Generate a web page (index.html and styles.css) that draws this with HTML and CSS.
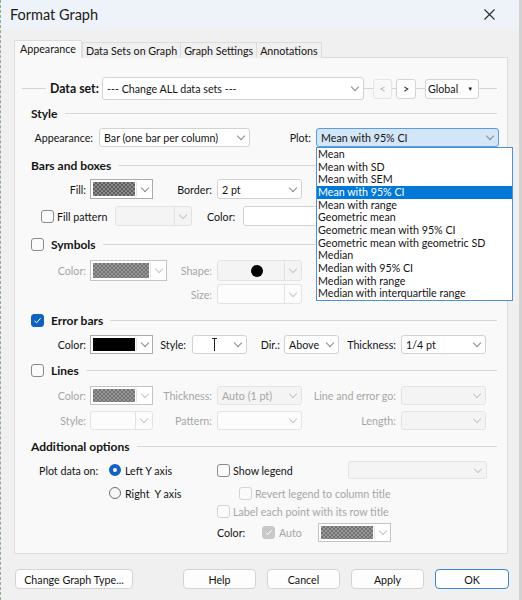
FILE: index.html
```html
<!DOCTYPE html>
<html lang="en">
<head>
  <meta charset="UTF-8" />
  <meta name="viewport" content="width=device-width, initial-scale=1.0" />
  <title>Format Graph</title>
  <link rel="stylesheet" href="styles.css">
</head>
<body>
  <div class="window">
    <div class="titlebar">
      <span class="title">Format Graph</span>
      <svg class="close" width="11" height="11" viewBox="0 0 11 11">
        <path d="M0.5 0.5 L10.5 10.5 M10.5 0.5 L0.5 10.5" stroke="#2b2b2b" stroke-width="1.1" fill="none" />
      </svg>
    </div>

    <div class="tabs">
      <div class="tab active">Appearance</div>
      <div class="tab">Data Sets on Graph</div>
      <div class="tab">Graph Settings</div>
      <div class="tab">Annotations</div>
    </div>

    <div class="panel">
      <!-- data set picker -->
      <div class="dataset">
        <span class="dataset-label">Data set:</span>
        <div class="combo big"><span>--- Change ALL data sets ---</span><span class="drop"></span></div>
        <span class="nav-btn off">&lt;</span>
        <span class="nav-btn">&gt;</span>
        <span class="global-btn">Global <span class="tri">&#9660;</span></span>
      </div>

      <div class="sec mt5">Style</div>
      <div class="row-style">
        <span class="lbl-app">Appearance:</span>
        <div class="combo w151"><span>Bar (one bar per column)</span><span class="drop"></span></div>
        <span class="lbl-plot">Plot:</span>
        <div class="combo focus w183"><span>Mean with 95% CI</span><span class="drop"></span></div>
      </div>

      <div class="sec mt10">Bars and boxes</div>
      <div class="grid mt6">
        <span class="lbl">Fill:</span>
        <div class="swatch"><span class="chip"></span><span class="drop"></span></div>
        <span class="lbl">Border:</span>
        <div class="combo"><span>2 pt</span><span class="drop"></span></div>
      </div>
      <div class="row-pattern">
        <span class="check"></span>
        <span class="pattern-text">Fill pattern</span>
        <div class="combo off split w77"><span class="drop"></span></div>
        <span class="pattern-color">Color:</span>
        <div class="combo w90"><span class="drop"></span></div>
      </div>

      <div class="sec mt10"><span class="check"></span>Symbols</div>
      <div class="grid mt8 h21">
        <span class="lbl dim">Color:</span>
        <div class="swatch off wide"><span class="chip"></span><span class="drop"></span></div>
        <span class="lbl dim">Shape:</span>
        <div class="combo off split shape"><span class="dot"></span><span class="drop"></span></div>
      </div>
      <div class="grid mt3">
        <span></span>
        <span></span>
        <span class="lbl dim">Size:</span>
        <div class="combo off light split"><span class="drop"></span></div>
      </div>

      <div class="sec mt8"><span class="check on"><svg width="11" height="11" viewBox="0 0 11 11"><path d="M2.5 5.8 L4.6 7.8 L8.6 3.2" stroke="#fff" stroke-width="1" fill="none" /></svg></span>Error bars</div>
      <div class="row-error">
        <span class="lbl">Color:</span>
        <div class="swatch black"><span class="chip"></span><span class="drop"></span></div>
        <span class="lbl-style">Style:</span>
        <div class="combo w55 tee">
          <svg width="7" height="15" viewBox="0 0 7 15"><path d="M1 1.5 H6 M3.5 1.5 V14" stroke="#222" stroke-width="1" fill="none" /></svg>
          <span class="drop"></span>
        </div>
        <span class="lbl-dir">Dir.:</span>
        <div class="combo w55"><span>Above</span><span class="drop"></span></div>
        <span class="lbl-thick">Thickness:</span>
        <div class="combo"><span>1/4 pt</span><span class="drop"></span></div>
      </div>

      <div class="sec mt8"><span class="check"></span>Lines</div>
      <div class="grid mt8 h19">
        <span class="lbl dim">Color:</span>
        <div class="swatch off"><span class="chip"></span><span class="drop"></span></div>
        <span class="lbl dim">Thickness:</span>
        <div class="combo off"><span>Auto (1 pt)</span><span class="drop"></span></div>
        <span class="lbl dim">Line and error go:</span>
        <div class="combo off"><span class="drop"></span></div>
      </div>
      <div class="grid mt6 h19">
        <span class="lbl dim">Style:</span>
        <div class="combo off light split w63"><span class="drop"></span></div>
        <span class="lbl dim">Pattern:</span>
        <div class="combo off light"><span class="drop"></span></div>
        <span class="lbl dim">Length:</span>
        <div class="combo off"><span class="drop"></span></div>
      </div>

      <div class="sec mt8">Additional options</div>
      <div class="opt-row mt7">
        <span class="opt-lbl">Plot data on:</span>
        <span class="opt-mid"><span class="radio on"></span>Left Y axis</span>
        <span class="opt-right">
          <span class="check"></span><span class="legend-text">Show legend</span>
          <div class="combo off legend-combo"><span class="drop"></span></div>
        </span>
      </div>
      <div class="opt-row mt5">
        <span class="opt-lbl"></span>
        <span class="opt-mid"><span class="radio"></span>Right&nbsp; Y axis</span>
        <span class="opt-right indent dim"><span class="check off"></span>Revert legend to column title</span>
      </div>
      <div class="opt-row">
        <span class="opt-lbl"></span>
        <span class="opt-mid"></span>
        <span class="opt-right dim"><span class="check off"></span>Label each point with its row title</span>
      </div>
      <div class="opt-row mt3">
        <span class="opt-lbl"></span>
        <span class="opt-mid"></span>
        <span class="opt-right">
          <span class="color-text">Color:</span>
          <span class="check off on-off"><svg width="11" height="11" viewBox="0 0 11 11"><path d="M2.5 5.8 L4.6 7.8 L8.6 3.2" stroke="#fff" stroke-width="1" fill="none" /></svg></span>
          <span class="auto-text dim">Auto</span>
          <div class="swatch off auto-swatch"><span class="chip"></span><span class="drop"></span></div>
        </span>
      </div>
    </div>

    <div class="buttons">
      <span class="btn wide">Change Graph Type...</span>
      <span class="btn">Help</span>
      <span class="btn">Cancel</span>
      <span class="btn">Apply</span>
      <span class="btn ok">OK</span>
    </div>

    <!-- open list of the Plot combo -->
    <ul class="plot-list">
      <li>Mean</li>
      <li>Mean with SD</li>
      <li>Mean with SEM</li>
      <li class="sel">Mean with 95% CI</li>
      <li>Mean with range</li>
      <li>Geometric mean</li>
      <li>Geometric mean with 95% CI</li>
      <li>Geometric mean with geometric SD</li>
      <li>Median</li>
      <li>Median with 95% CI</li>
      <li>Median with range</li>
      <li>Median with interquartile range</li>
    </ul>
  </div>
</body>
</html>
```

FILE: styles.css
```css
* {
  box-sizing: border-box;
}

html, body {
  margin: 0;
  padding: 0;
  width: 522px;
  height: 600px;
  overflow: hidden;
  background-color: #fafafa;
  font-family: Lato, "Noto Sans", sans-serif;
  font-size: 10.7px;
  color: #141414;
}

.window {
  position: relative;
  width: 522px;
  height: 600px;
  background-color: #f0f0f0;
  border-left: 1px dashed #93ab93;
  border-right: 3px solid #d2d2d2;
}

/* title bar */
.titlebar {
  display: flex;
  align-items: center;
  height: 29px;
  padding-left: 9px;
  background-color: #eef2f9;
}

.title {
  font-size: 14.5px;
  color: #1a1a1a;
}

.close {
  margin-left: auto;
  margin-right: 24px;
}

/* tabs */
.tabs {
  display: flex;
  align-items: flex-end;
  height: 18px;
  margin: 11px 0 0 13px;
  position: relative;
  z-index: 1;
}

.tab {
  height: 16px;
  line-height: 15px;
  padding: 0 3px;
  margin-left: -1px;
  border: 1px solid #dcdcdc;
  border-bottom: none;
  background-color: #f0f0f0;
}

.tab.active {
  height: 18px;
  line-height: 16px;
  padding: 0 5px;
  margin-left: 0;
  margin-right: 1px;
  background-color: #f9f9f9;
}

.panel {
  margin: -1px 0 0 13px;
  width: 494px;
  height: 497px;
  background-color: #f9f9f9;
  border: 1px solid #dcdcdc;
}

/* data set row, the rule runs behind the controls */
.dataset {
  display: flex;
  align-items: center;
  width: 475px;
  height: 23px;
  margin: 19px 0 0 7px;
  background: linear-gradient(#d4d4d4, #d4d4d4) 0 50% / 100% 1px no-repeat;
}

.dataset-label {
  width: 56px;
  margin-left: 24px;
  padding-left: 4px;
  background-color: #f9f9f9;
  font-weight: bold;
  font-size: 12.3px;
  line-height: 23px;
  white-space: nowrap;
}

.nav-btn {
  width: 19px;
  height: 20px;
  margin-left: 9px;
  display: flex;
  align-items: center;
  justify-content: center;
  background-color: #fdfdfd;
  border: 1px solid #d3d3d3;
  border-radius: 3px;
}

.nav-btn + .nav-btn {
  width: 20px;
  margin-left: 4px;
}

.nav-btn.off {
  color: #b5b5b5;
  background-color: #f8f8f8;
  border-color: #e6e6e6;
}

.global-btn {
  width: 54px;
  height: 20px;
  margin-left: 9px;
  padding-left: 2px;
  display: flex;
  align-items: center;
  background-color: #fdfdfd;
  border: 1px solid #d3d3d3;
  border-radius: 3px;
}

.tri {
  font-size: 6px;
  margin-left: 9px;
}

/* section headings with a rule */
.sec {
  display: flex;
  align-items: center;
  width: 466px;
  height: 16px;
  margin-left: 16px;
  font-weight: bold;
  font-size: 12px;
  white-space: nowrap;
}

.sec::after {
  content: '';
  flex: 1;
  height: 1px;
  margin-left: 7px;
  background-color: #d6d6d6;
}

.sec .check {
  margin-right: 7px;
}

.mt3 { margin-top: 3px; }
.mt5 { margin-top: 5px; }
.mt6 { margin-top: 6px; }
.mt7 { margin-top: 7px; }
.mt8 { margin-top: 8px; }
.mt10 { margin-top: 10px; }

/* combo boxes */
.combo {
  display: flex;
  align-items: center;
  height: 20px;
  width: 85px;
  padding-left: 4px;
  background-color: #fff;
  border: 1px solid #d2d2d2;
  border-radius: 3px;
  white-space: nowrap;
}

.combo.big {
  width: 262px;
  height: 23px;
}

.combo.focus {
  background-color: #d2e6f8;
  border-color: #5b9ddc;
}

.combo.off {
  background-color: #f4f4f4;
  border-color: #e3e3e3;
  color: #a6a6a6;
}

.combo.light {
  background-color: #fcfcfc;
}

.drop {
  margin-left: auto;
  width: 17px;
  align-self: stretch;
  display: flex;
  align-items: center;
  justify-content: center;
  flex: none;
}

.drop::after {
  content: '';
  width: 5px;
  height: 5px;
  margin-top: -3px;
  border-right: 1px solid #8a8a8a;
  border-bottom: 1px solid #8a8a8a;
  transform: rotate(45deg);
}

.off .drop::after {
  border-color: #c6c6c6;
}

.split .drop {
  border-left: 1px solid #e2e2e2;
}

.w55 { width: 55px; }
.w63 { width: 63px; }
.w77 { width: 77px; }
.w90 { width: 90px; }
.w151 { width: 151px; }
.w183 { width: 183px; }

/* colour buttons */
.swatch {
  display: flex;
  width: 63px;
  height: 20px;
  padding: 2px 0 2px 2px;
  background-color: #fff;
  border: 1px solid #ababab;
}

.swatch.wide {
  width: 77px;
}

.chip {
  flex: 1;
  background: repeating-conic-gradient(#5f5f5f 0 25%, #8a8a8a 0 50%) 0 0 / 4px 4px;
}

.swatch.off .chip {
  background: repeating-conic-gradient(#727272 0 25%, #979797 0 50%) 0 0 / 4px 4px;
}

.swatch.off {
  border-color: #c4c4c4;
}

.swatch.black .chip {
  background: #000;
}

.swatch .drop {
  width: 16px;
  margin-left: 1px;
  border-left: 1px solid #e4e4e4;
}

/* rows */
.row-style {
  display: flex;
  align-items: center;
  height: 19px;
  margin-top: 7px;
}

.row-style .combo {
  height: 19px;
}

.lbl-app {
  width: 84px;
  padding-right: 6px;
  text-align: right;
}

.lbl-plot {
  width: 66px;
  padding-right: 5px;
  text-align: right;
}

.grid {
  display: grid;
  grid-template-columns: 75px 73px 54px 85px 99px 85px;
  align-items: center;
  height: 20px;
}

.grid.h21 { height: 21px; }
.grid.h19 { height: 19px; }

.grid .combo,
.grid .swatch {
  height: 100%;
}

.lbl {
  text-align: right;
  padding-right: 5px;
  white-space: nowrap;
}

.grid .lbl:first-child {
  padding-right: 4px;
}

.dim {
  color: #a6a6a6;
}

.row-pattern {
  display: flex;
  align-items: center;
  height: 20px;
  margin-top: 7px;
  padding-left: 26px;
}

.row-pattern .combo {
  height: 20px;
}

.pattern-text {
  width: 58px;
  margin-left: 3px;
}

.pattern-color {
  width: 51px;
  padding-left: 15px;
}

.shape .dot {
  width: 12px;
  height: 12px;
  margin-left: 29px;
  border-radius: 50%;
  background-color: #000;
}

.row-error {
  display: flex;
  align-items: center;
  height: 19px;
  margin-top: 7px;
}

.row-error .combo,
.row-error .swatch {
  height: 19px;
}

.row-error > .lbl:first-child {
  width: 75px;
  padding-right: 4px;
}

.lbl-style {
  width: 39px;
  padding-right: 6px;
  text-align: right;
}

.tee svg {
  margin-left: 14px;
}

.lbl-dir {
  width: 37px;
  padding-right: 4px;
  text-align: right;
}

.lbl-thick {
  width: 62px;
  padding-right: 5px;
  text-align: right;
}

/* checkboxes and radios */
.check {
  display: inline-flex;
  align-items: center;
  justify-content: center;
  flex: none;
  width: 13px;
  height: 13px;
  background-color: #fbfbfb;
  border: 1px solid #8a8a8a;
  border-radius: 3px;
}

.check.on {
  background-color: #0f62c2;
  border-color: #0f62c2;
}

.check.off {
  border-color: #d3d3d3;
}

.check.on-off {
  background-color: #c8c8c8;
  border-color: #c8c8c8;
}

.radio {
  flex: none;
  width: 12px;
  height: 12px;
  margin-right: 4px;
  border-radius: 50%;
  background-color: #f7f7f7;
  border: 1px solid #6f6f6f;
}

.radio.on {
  background-color: #fff;
  border: 4px solid #0f62c2;
}

/* additional options */
.opt-row {
  display: flex;
  align-items: center;
  height: 18px;
}

.opt-lbl {
  width: 94px;
  padding-left: 24px;
  flex: none;
}

.opt-mid {
  display: flex;
  align-items: center;
  width: 108px;
  flex: none;
}

.opt-right {
  display: flex;
  align-items: center;
  flex: none;
}

.opt-right > .check {
  margin-right: 3px;
}

.opt-right.indent {
  padding-left: 22px;
}

.legend-text {
  width: 115px;
}

.legend-combo {
  width: 139px;
  height: 18px;
}

.color-text {
  width: 45px;
}

.auto-text {
  width: 40px;
  padding-left: 1px;
}

.auto-swatch {
  width: 73px;
  height: 19px;
}

/* dialog buttons */
.buttons {
  display: flex;
  margin-top: 15px;
  padding-left: 14px;
}

.btn {
  display: flex;
  align-items: center;
  justify-content: center;
  width: 73px;
  height: 20px;
  margin-left: 11px;
  background-color: #fdfdfd;
  border: 1px solid #d3d3d3;
  border-radius: 4px;
}

.btn.wide {
  width: 118px;
  margin-left: 0;
  margin-right: 39px;
}

.btn.ok {
  width: 74px;
  border-color: #3c86d4;
}

/* dropdown list */
.plot-list {
  position: absolute;
  left: 315px;
  top: 147px;
  width: 197px;
  margin: 0;
  padding: 0;
  list-style: none;
  background-color: #fff;
  border: 1px solid #4f8fd8;
}

.plot-list li {
  height: 12.67px;
  line-height: 12.67px;
  padding-left: 1px;
  white-space: nowrap;
}

.plot-list li.sel {
  background-color: #0078d7;
  color: #fff;
}
```
